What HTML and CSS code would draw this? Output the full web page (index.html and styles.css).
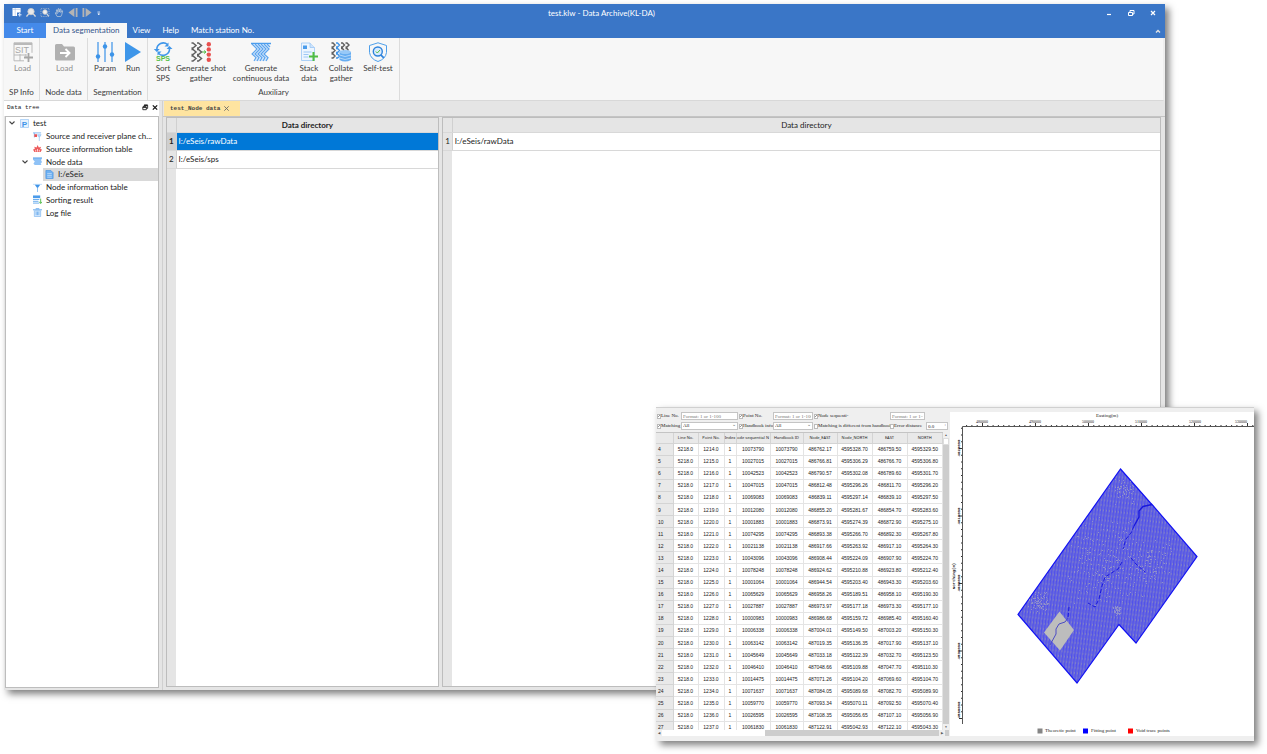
FILE: index.html
```html
<!DOCTYPE html>
<html lang="en">
<head>
<meta charset="utf-8">
<title>test.klw - Data Archive(KL-DA)</title>
<link rel="stylesheet" href="styles.css">
</head>
<body>
<div class="desktop">
<main class="window">
  <header class="titlebar">
    <div class="title-row">
      <div class="quick">
        <button aria-label="New"><svg viewBox="0 0 10 10"><path d="M0 0h9v5H5v4H0z" fill="#fff"/><path d="M0 1.500h9M3 0v9" stroke="#9db9df" stroke-width=".6"/><path d="M6 7.500h4M8 5.500v4" stroke="#dbe9fb" stroke-width="1.200"/></svg></button>
        <button aria-label="Zoom in"><svg viewBox="0 0 10 10"><circle cx="5" cy="4" r="3.500" fill="#e8e8e8" stroke="#c9c9c9"/><path d="M2.500 6.500L0 9.500M7.500 6.500L10 9.500" stroke="#d8d8d8" stroke-width="1.500"/></svg></button>
        <button aria-label="Zoom area"><svg viewBox="0 0 10 10"><rect x=".5" y=".5" width="9" height="9" fill="none" stroke="#a9b8cc" stroke-dasharray="1 1"/><circle cx="5" cy="4.500" r="2.500" fill="#f2f2f2" stroke="#ccc"/><path d="M7 6.500l2 2.500" stroke="#ddd" stroke-width="1.200"/></svg></button>
        <button aria-label="Pan"><svg viewBox="0 0 10 10"><path d="M3 9.500L.8 5.500l1-.4L3 6.500 2 2.200l1-.2 1 3V.8h1L5.500 4.500 6.200 1l1 .2L7 5l1.200-2.200.9.500L8 7.500 7 9.500z" fill="none" stroke="#c6cfdb" stroke-width=".8"/></svg></button>
        <button aria-label="Previous"><svg viewBox="0 0 10 10"><path d="M6.500 0v10L0 5z" fill="#b4b4b4"/><path d="M9 0v10" stroke="#b4b4b4" stroke-width="2"/></svg></button>
        <button aria-label="Next"><svg viewBox="0 0 10 10"><path d="M3.500 0v10L10 5z" fill="#b4b4b4"/><path d="M1 0v10" stroke="#b4b4b4" stroke-width="2"/></svg></button>
        <button aria-label="Customize"><svg viewBox="0 0 10 10"><path d="M1 4.500h3M1.500 6.500h2l-1 1z" stroke="#fff" fill="#fff" stroke-width=".8"/></svg></button>
      </div>
      <h1>test.klw - Data Archive(KL-DA)</h1>
      <div class="winctl">
        <button aria-label="Minimize"><svg viewBox="0 0 8 8"><path d="M2 5.500h4" stroke="#fff" stroke-width="1.200"/></svg></button>
        <button aria-label="Restore"><svg viewBox="0 0 8 8"><path d="M3 3V1.500h4V5H5.500M1.500 3.500h4v3h-4z" stroke="#fff" fill="none"/></svg></button>
        <button aria-label="Close"><svg viewBox="0 0 8 8"><path d="M2 2l4 4M6 2L2 6" stroke="#fff" stroke-width="1.200"/></svg></button>
      </div>
    </div>
    <nav class="menu">
      <button class="start">Start</button>
      <button class="active">Data segmentation</button>
      <button>View</button>
      <button>Help</button>
      <button>Match station No.</button>
      <button class="collapse" aria-label="Collapse ribbon"><svg viewBox="0 0 8 8"><path d="M2 5.500L4 3.500l2 2" stroke="#e4e4e4" stroke-width="1.400" fill="none"/></svg></button>
    </nav>
  </header>

  <section class="ribbon">
    <div class="group sp">
      <div class="tools">
        <button class="tool off"><svg viewBox="0 0 20 20"><path d="M1 .8h18v10M1 .8v18h10M1 13h12M7 .8v2M13 .8v2M7 12v7M13 12v3" fill="none" stroke="#b9b9b9"/><path d="M1 1h18v2H1z" fill="#b9b9b9"/><text x="2" y="11" font-size="9" fill="#a8a8a8">SIT</text><path d="M11 15.500h9M15.500 11v9" stroke="#a6a6a6" stroke-width="1.800"/></svg><span>Load</span></button>
      </div><h2>SP Info</h2>
    </div>
    <div class="group nd">
      <div class="tools">
        <button class="tool off"><svg viewBox="0 0 20 20"><path d="M0 3.500Q0 2 1.500 2H7l2 2.500h9.500Q20 4.500 20 6v11q0 1.500-1.500 1.500h-17Q0 18.500 0 17z" fill="#b1b1b1"/><path d="M5 11h9M10.500 7l4 4-4 4" fill="none" stroke="#fff" stroke-width="1.900"/></svg><span>Load</span></button>
      </div><h2>Node data</h2>
    </div>
    <div class="group sg">
      <div class="tools">
        <button class="tool"><svg viewBox="0 0 20 20"><path d="M3 0v20M10 0v20M17 0v20" stroke="#4b9bea" stroke-width="1.300"/><g fill="#3c93e8"><circle cx="3" cy="14.500" r="2.200"/><circle cx="10" cy="4.500" r="2.200"/><circle cx="17" cy="12.500" r="2.200"/></g></svg><span>Param</span></button>
        <button class="tool"><svg viewBox="0 0 20 20"><path d="M2 0l16 10L2 20z" fill="#3e96e9"/></svg><span>Run</span></button>
      </div><h2>Segmentation</h2>
    </div>
    <div class="group aux">
      <div class="tools">
        <button class="tool w24"><svg viewBox="0 0 20 20"><g fill="none" stroke="#4097ea" stroke-width="1.600"><path d="M3.800 7.500A6.500 6.500 0 0 1 14.500 2.500M16.500 6.500A6.500 6.500 0 0 1 5.500 11.500"/></g><path d="M15.500.5v4h-4zM4.500 13.500v-4h4zM.8 7h6L3.800 10zM13.500 7h6l-3-3z" fill="#4097ea"/><text x="10" y="19" font-size="7" font-weight="700" text-anchor="middle" fill="#56bf48">SPS</text></svg><span>Sort<br>SPS</span></button>
        <button class="tool w52"><svg viewBox="0 0 20 20"><g fill="none" stroke="#606060" stroke-width="1.500"><path d="M.5 1h1.500l3 2.500-3 2.500H.5M.5 7.500h1.500l3 2.500-3 2.500H.5M.5 14h1.500l3 2.500-3 2.500H.5M6 1h1.500l3 2.500L7.500 6H6M6 7.500h1.500l3 2.500-3 2.500H6M6 14h1.500l3 2.500-3 2.500H6"/></g><path d="M11 10h4M13 8.500l2 1.500-2 1.500" stroke="#56bf48" fill="none"/><g fill="#e8504f"><circle cx="17.800" cy="2.200" r="2.200"/><circle cx="17.800" cy="7.400" r="2.200"/><circle cx="17.800" cy="12.600" r="2.200"/><circle cx="17.800" cy="17.800" r="2.200"/></g></svg><span>Generate shot<br>gather</span></button>
        <button class="tool w68"><svg viewBox="0 0 20 20"><path d="M0 1.500h20" stroke="#4b9cec" stroke-width="1.500"/><path d="M1 2l5 5-5 5 4 3.500L3 19h13l2-3.500-4-3.500 5-5-2-2 2-3z" fill="#d3e6fb"/><g fill="none" stroke="#5ba4ee" stroke-width="1.100"><path d="M1 2l5 5-5 5 4 3.500L3 19M4 2l5 5-5 5 4 3.500L6 19M7 2l5 5-5 5 4 3.500L9 19M10 2l5 5-5 5 4 3.500-2 3.500M13 2l5 5-5 5 4 3.500-2 3.500M16 2l3 3"/></g></svg><span>Generate<br>continuous data</span></button>
        <button class="tool w28"><svg viewBox="0 0 20 20"><path d="M2.500 1H11l4.500 4.500V18.500h-13z" fill="#edf5fe" stroke="#9bc7f5" stroke-width=".8"/><path d="M11 1v4.500h4.500" fill="#cfe4fb" stroke="#9bc7f5" stroke-width=".8"/><path d="M4 3.500h4v3.500H4z" fill="#4a9ceb"/><path d="M4.500 10h8M4.500 12.500h5M4.500 15h5" stroke="#9bc7f5"/><path d="M10 14.500h9M14.500 10v9" stroke="#51bd43" stroke-width="2"/></svg><span>Stack<br>data</span></button>
        <button class="tool w36"><svg viewBox="0 0 20 20"><g fill="none" stroke="#606060" stroke-width="1.400"><path d="M.5 1H2l2 2-2 2H.500M.5 6.500H2l2 2-2 2H.500M.5 12H2l2 2-2 2H.500"/><path d="M5 1h1.500l2 2-2 2H5M5 6.500h1.500l2 2-2 2H5M5 12h1.500l2 2-2 2H5" stroke="#3f94e8"/><path d="M10 1h1.500l2 2-2 2H10M14.500 1H16l2 2-2 2h-1.500M10 6.500h1.500l1.500 2M14.500 6.500H16l1.500 2"/></g><path d="M8.500 10v8q5.500 3 11.500 0v-8z" fill="#66adf1"/><ellipse cx="14.200" cy="10" rx="5.700" ry="2" fill="#98c9f7"/><path d="M8.500 13q5.500 3 11.500 0M8.500 16q5.500 3 11.500 0" fill="none" stroke="#d3e8fc" stroke-width=".7"/></svg><span>Collate<br>gather</span></button>
        <button class="tool w38"><svg viewBox="0 0 20 20"><path d="M10 .8l8.500 2.700v7Q17.500 17 10 19.500 2.500 17 1.500 10.500v-7z" fill="none" stroke="#4e9fea"/><circle cx="9.800" cy="9.500" r="4.500" fill="#d9ebfd" stroke="#2e83dc" stroke-width="1.400"/><path d="M7.800 9.500l1.500 1.500 2.700-3" fill="none" stroke="#51bd43"/><path d="M12.800 12.800l3 3" stroke="#2e83dc" stroke-width="1.700"/></svg><span>Self-test</span></button>
      </div><h2>Auxiliary</h2>
    </div>
  </section>

  <div class="work">
    <aside class="dock">
      <div class="dock-title"><h2>Data tree</h2>
        <button aria-label="Float"><svg viewBox="0 0 8 8"><path d="M3 3V1.500h4V5H5.500M1.500 3.500h4v3h-4z" stroke="#222" fill="none"/><path d="M3 1.500h4M1.500 3.500h4" stroke="#222" stroke-width="1.600"/></svg></button>
        <button aria-label="Close"><svg viewBox="0 0 8 8"><path d="M1.500 1.500l5 5M6.500 1.500l-5 5" stroke="#111" stroke-width="1.400"/></svg></button>
      </div>
      <div class="tree-box">
      <ul class="tree">
        <li class="l0"><svg class="arrow" viewBox="0 0 8 8"><path d="M1.500 2.500L4 5l2.500-2.500" stroke="#444" fill="none" stroke-width="1.100"/></svg><svg viewBox="0 0 10 10"><path d="M.5 .5h9v9h-9z" fill="#e6f2fe" stroke="#a9cff6"/><text x="5" y="8.500" text-anchor="middle" font-size="9" font-weight="700" fill="#3f94e8">P</text></svg>test</li>
        <li class="l1"><svg viewBox="0 0 10 10"><path d="M0 1h9M1.500 1v5" stroke="#79b3ef"/><path d="M1.500 2.500h3v3h-3z" fill="#ec4e50"/><path d="M5 3h4L7 6zM7 6v4" fill="#bcdcfa" stroke="#93c3f2" stroke-width=".8"/></svg>Source and receiver plane ch...</li>
        <li class="l1"><svg viewBox="0 0 10 10"><path d="M1.500 9L0 6l2-.5L1.500 3 4 4l1-3 1.500 3L9 3l-1 2.500 2 .5-1.500 3z" fill="#ed5a5b"/><path d="M3 8.500V6.500M5 8.500V5.500M7 8.500V6.500" stroke="#fff" stroke-width=".8"/></svg>Source information table</li>
        <li class="l1 open"><svg class="arrow" viewBox="0 0 8 8"><path d="M1.500 2.500L4 5l2.500-2.500" stroke="#444" fill="none" stroke-width="1.100"/></svg><svg viewBox="0 0 10 10"><path d="M0 1h10L9 3.500l1 2-1.500 2L9.500 9H2L.5 7.500 2 5 0 3z" fill="#8fc2f6"/><path d="M0 1h10" stroke="#579fe9"/></svg>Node data</li>
        <li class="l2 sel"><svg viewBox="0 0 10 10"><path d="M1 .5h5.500L9 3v6.500H1z" fill="#6fb1f2" stroke="#3e8fe2" stroke-width=".7"/><path d="M2.500 4h5M2.500 6h5M2.500 8h5" stroke="#d8eafd" stroke-width=".7"/></svg>I:/eSeis</li>
        <li class="l1"><svg viewBox="0 0 10 10"><path d="M0 1.500h10" stroke="#c0dcf8"/><path d="M2 2h6L5 6z" fill="#3f94e8"/><path d="M5 5v5" stroke="#82b9f0"/></svg>Node information table</li>
        <li class="l1"><svg viewBox="0 0 10 10"><path d="M0 .5h8v3H0z" fill="#4b9bea"/><path d="M0 5h7M0 7h6M0 9h7" stroke="#5ca5ec"/><path d="M8.500 4v5M7 7.500l1.500 2 1.500-2" stroke="#4fbb47" fill="none"/></svg>Sorting result</li>
        <li class="l1"><svg viewBox="0 0 10 10"><path d="M0 2h10M3 .8h4" stroke="#5ba4ec"/><path d="M1.500 3h7v6.500h-7z" fill="#d7eafd" stroke="#84baf0" stroke-width=".8"/><path d="M3.500 4v4M5 4v4M6.500 4v4" stroke="#4c9be8" stroke-width=".7"/></svg>Log file</li>
      </ul>
      </div>
    </aside>
    <section class="docs">
      <div class="doc-tabs"><button class="doc-tab">test_Node data <svg viewBox="0 0 8 8"><path d="M1.500 1.500l5 5M6.500 1.500l-5 5" stroke="#666"/></svg></button></div>
      <div class="panes">
        <div class="pane left">
          <table class="dirs"><thead><tr><th></th><th>Data directory</th></tr></thead>
          <tbody><tr class="sel"><th>1</th><td>I:/eSeis/rawData</td></tr><tr><th>2</th><td>I:/eSeis/sps</td></tr></tbody></table>
        </div>
        <div class="pane right">
          <table class="dirs"><thead><tr><th></th><th>Data directory</th></tr></thead>
          <tbody><tr><th>1</th><td>I:/eSeis/rawData</td></tr></tbody></table>
        </div>
      </div>
    </section>
  </div>
</main>

<section class="inspector">
  <div class="data">
    <form class="filters">
      <label><input type="checkbox" checked>Line No.</label>
      <input type="text" aria-label="Line No." placeholder="Format: 1 or 1-100">
      <label><input type="checkbox" checked>Point No.</label>
      <input type="text" aria-label="Point No." placeholder="Format: 1 or 1-100">
      <label><input type="checkbox" checked>Node sequenti-</label>
      <input type="text" aria-label="Node sequential" placeholder="Format: 1 or 1--">
      <i></i>
      <label><input type="checkbox" checked>Matching</label>
      <div class="drop"><select aria-label="Matching"><option>All</option></select></div>
      <label><input type="checkbox" checked>Handbook info</label>
      <div class="drop"><select aria-label="Handbook info"><option>All</option></select></div>
      <label><input type="checkbox">Matching is different from handbook</label>
      <label><input type="checkbox">Error distance</label>
      <div class="drop spin"><input type="text" aria-label="Error distance" value="0.0"></div>
    </form>
    <div class="grid-area">
      <div class="grid-clip">
        <table class="stations">
          <colgroup><col class="c17"><col class="c25"><col class="c26"><col class="c12"><col class="c34"><col class="c33"><col class="c34"><col class="c35"><col class="c35"><col></colgroup>
          <thead><tr><th></th><th>Line No.</th><th>Point No.</th><th>Index</th><th>ode sequential N</th><th>Handbook ID</th><th>Node_EAST</th><th>Node_NORTH</th><th>EAST</th><th>NORTH</th></tr></thead>
          <tbody id="rows"></tbody>
        </table>
      </div>
      <div class="vbar"><b>▲</b><i></i><b class="end">▼</b></div>
      <div class="hbar"><b>◀</b><i></i><b class="end">▶</b></div>
    </div>
  </div>
  <svg class="plot" viewBox="950 412 304 324">
    <defs>
      <pattern id="weave" width="3" height="5" patternUnits="userSpaceOnUse" patternTransform="rotate(7)">
        <rect width="3" height="5" fill="#6767de"/><rect width="1" height="5" fill="#5050ea"/><rect x="2" y="1" width="1" height="2" fill="#8080c8"/>
      </pattern>
    </defs>
    <path d="M962.500 724V426.500H1254" fill="none" stroke="#555"/>
    <g id="ticks" stroke="#333"></g>
    <g id="labels" class="axis"></g>
    <text class="title" x="1107" y="417" text-anchor="middle">Easting(m)</text>
    <text class="ylab" transform="translate(955 576) rotate(-90)" text-anchor="middle">Northing(m)</text>
    <path id="area" d="M1120.500 469L1150.500 503L1152 504.500L1197 556.500L1136 643L1119 624.500L1077 683L1018 614.500Z" fill="url(#weave)" stroke="#1212f4" stroke-width="1.200"/>
    <g id="specks" fill="#9090cc"></g>
    <path d="M1059.500 611.500L1074 630L1060 650.500L1044 632.500Z" fill="#bdbdbd"/>
    <g fill="none" stroke="#1818dd">
      <path d="M1152 504.500l-9 2-4 4.500v6l-5 9" stroke-width="1.400"/>
      <path d="M1134 526l-3 7-5 6-3 10M1131 558l5 6 9 8M1122 562l-4 7-13 8-3 9-3 13-4 8-7-4M1069 607l-1 11" stroke-dasharray="4 2"/>
      <path d="M1068 618l-3 4-6 2-3 5v5l-6 11" stroke="#4c4cc4"/>
    </g>
    <path d="M1037.500 728.500h5v5h-5z" fill="#858585"/><text class="legend" x="1045" y="732">Theoretic point</text>
    <path d="M1083 728.500h5v5h-5z" fill="#00f"/><text class="legend" x="1091" y="732">Fitting point</text>
    <path d="M1128 728.500h5v5h-5z" fill="#f00"/><text class="legend" x="1136" y="732">Void trace points</text>
  </svg>
</section>
</div>
<script src="script.js"></script>
</body>
</html>
```
FILE: styles.css
```css
* { box-sizing: border-box; }
body { margin: 0; background: #fff; font-family: Lato, "Noto Sans", sans-serif; font-size: 8px; line-height: 10px; color: #222; }
h1, h2 { margin: 0; font-size: inherit; font-weight: 400; }
button { border: 0; padding: 0; background: none; font: inherit; color: inherit; }
svg { display: block; }
.desktop { position: relative; min-height: 100vh; padding: 4px 102px 64px 4px; display: flex; overflow: hidden; }

.window { flex: 1; display: flex; flex-direction: column; background: #e5e5e5; box-shadow: 4px 4px 7px 0 rgba(0,0,0,.5); }
.titlebar { background: #3a76c7; color: #fff; }
.title-row { display: flex; justify-content: space-between; align-items: center; height: 19px; padding: 0 8px 2px; }
.title-row h1 { padding-left: 34px; }
.quick, .winctl { display: flex; flex: 1; gap: 4px; align-items: center; }
.quick svg { width: 10px; height: 9px; }
.winctl { justify-content: flex-end; gap: 14px; }
.winctl svg { width: 8px; height: 8px; }
.menu { display: flex; height: 15px; }
.menu button { padding: 0 6px 2px; }
.menu .start { width: 42px; background: #448aea; }
.menu .active { padding: 0 7px 2px; background: #f7f7f7; color: #34548a; }
.menu .collapse { margin-left: auto; padding: 0 3px; }
.collapse svg { width: 8px; height: 8px; }

.ribbon { display: flex; height: 63px; background: #f7f7f7; border-bottom: 1px solid #d8d8d8; border-right: 2px solid #eee; color: #3c3c3c; }
.group { display: flex; flex-direction: column; justify-content: space-between; border-right: 1px solid #dcdcdc; padding: 4px 0 3px; }
.group h2 { text-align: center; }
.sp { width: 36px; }
.nd { width: 48px; }
.sg { width: 60px; }
.aux { width: 252px; }
.tools { display: flex; justify-content: center; padding-left: 2px; }
.sg .tools { justify-content: flex-end; }
.aux .tools { justify-content: flex-start; padding-left: 3px; }
.tool { display: flex; flex-direction: column; align-items: center; justify-content: flex-start; gap: 1px; width: 28px; white-space: nowrap; }
.tool svg { width: 20px; height: 20px; font-family: "Liberation Sans", sans-serif; }
.tool.off { color: #8d8d8d; }
.w24 { width: 24px; } .w52 { width: 52px; } .w68 { width: 68px; } .w36 { width: 36px; } .w38 { width: 38px; }

.work { flex: 1; display: flex; min-height: 0; }
.dock { width: 159px; display: flex; flex-direction: column; padding: 0 3px 2px 0; border-right: 1px solid #d0d0d0; background: #e5e5e5; }
.dock-title { display: flex; gap: 2px; align-items: center; height: 15px; padding: 0 0 2px 3px; background: #fff; }
.dock-title h2 { margin-right: auto; }
.dock-title h2, .doc-tab { font-family: "Liberation Mono", monospace; font-size: 6px; }
.dock-title svg { width: 8px; height: 7px; }
.tree-box { flex: 1; margin-left: 1px; border: 1px solid #bdbdbd; background: #fff; }
.tree { display: grid; grid-auto-rows: 1fr; height: 102px; margin: 0; padding: 0; list-style: none; }
.tree li { display: flex; align-items: center; gap: 4px; white-space: nowrap; }
.tree svg { width: 9px; height: 9px; font-family: "Liberation Sans", sans-serif; }
.tree .arrow { width: 8px; height: 8px; }
.tree .l0 { padding-left: 2px; }
.tree .l1 { padding-left: 27px; }
.tree .open { padding-left: 15px; }
.tree .sel { margin-left: 37px; padding-left: 2px; background: #d9d9d9; }
.docs { flex: 1; display: flex; flex-direction: column; }
.doc-tabs { display: flex; height: 15px; padding-left: 1px; }
.doc-tab { display: flex; align-items: center; gap: 3px; padding: 0 10px 0 6px; background: #fee4a0; font-weight: 700; color: #444; }
.doc-tab svg { width: 7px; height: 7px; }
.panes { flex: 1; display: flex; gap: 3px; padding: 0 4px 3px 3px; border-top: 1px solid #c4c4c4; }
.pane { border: 1px solid #bdbdbd; background: linear-gradient(90deg, #e5e5e5 9px, #fff 9px); }
.left { flex: 273; }
.right { flex: 721; }
.dirs { width: 100%; border-collapse: collapse; table-layout: fixed; }
.dirs th, .dirs td { height: 18px; padding: 0; border-bottom: 1px solid #d8d8d8; text-align: left; background: #fff; }
.dirs tbody th, .dirs thead th { background: #e5e5e5; text-align: center; font-weight: 400; }
.dirs th:first-child { width: 9px; border-right: 1px solid #d0d0d0; }
.dirs thead th { height: 14px; }
.dirs td { padding-left: 2px; }
.left thead th:last-child { font-weight: 700; }
.dirs .sel td { background: #0078d7; color: #fff; }
.dirs .sel th { background: #cfcfcf; font-weight: 700; }

.inspector { position: absolute; right: 13px; bottom: 13px; width: 598px; height: 334px; display: flex; gap: 1px; padding: 4px 0 5px; background: #efefef; border-top: 1px solid #d0d0d0; box-shadow: 4px 4px 7px 0 rgba(0,0,0,.5); }
.data { width: 293px; display: flex; flex-direction: column; }
.filters { display: grid; grid-template-columns: 23px 57px 33px 40px 75px 35px 22px; grid-auto-rows: 8px; gap: 2px 1px; height: 20px; margin: 0; padding-left: 1px; font-family: "Liberation Serif", serif; font-size: 5px; line-height: 8px; }
.filters label { display: flex; align-items: center; white-space: nowrap; }
.filters input, .filters select { width: 100%; min-width: 0; height: 8px; margin: 0; padding: 0 1px; border: 1px solid #c4c4c4; background: #fff; font: inherit; line-height: 6px; color: #222; appearance: none; border-radius: 0; }
.filters ::placeholder { color: #777; }
.filters input[type=checkbox] { flex: none; width: 4px; height: 5px; padding: 0; border-color: #bbb; }
.filters input:checked { background: linear-gradient(135deg, #fff 40%, #999 40%, #999 60%, #fff 60%); }
.drop { position: relative; display: flex; }
.drop::after { content: "⌄"; position: absolute; right: 2px; top: -1px; color: #555; }
.spin::after { content: ":"; }
.grid-area { flex: 1; min-height: 0; display: grid; grid-template: minmax(0, 1fr) 6px / minmax(0, 1fr) 6px; }
.grid-clip { overflow: hidden; border-top: 1px solid #c4c4c4; background: #fff; }
.stations { width: 100%; height: 301px; table-layout: fixed; border-collapse: collapse; font-family: "Liberation Sans", sans-serif; font-size: 5px; line-height: 6px; color: #222; }
.stations th, .stations td { padding: 0; border: 1px solid #e4e4e4; border-width: 0 1px 1px 0; text-align: center; white-space: nowrap; }
.stations th { background: #e9e9e9; border-color: #d4d4d4; font-weight: 400; }
.stations thead { font-family: "Noto Sans", sans-serif; font-size: 4px; }
.stations thead tr { height: 10px; }
.stations tbody th { text-align: left; padding-left: 2px; }
.c12 { width: 12px; } .c17 { width: 17px; } .c25 { width: 25px; } .c26 { width: 26px; } .c33 { width: 33px; } .c34 { width: 34px; } .c35 { width: 35px; }
.vbar, .hbar { display: flex; background: #cdcdcd; font-size: 3px; line-height: 6px; color: #555; }
.vbar { flex-direction: column; }
.hbar { grid-column: 1 / -1; }
.vbar b, .hbar b { width: 6px; height: 6px; text-align: center; background: #efefef; }
.vbar i { height: 7px; background: #fff; border: 1px solid #ddd; }
.hbar i { width: 103px; background: #fff; }
.vbar .end { margin-top: auto; }
.hbar .end { margin-left: auto; margin-right: 4px; }
.plot { flex: 1; min-width: 0; height: 100%; background: #fff; font-family: "Liberation Serif", serif; }
.axis, .legend, .title, .ylab { fill: #222; }
.axis, .ylab { font-size: 4px; }
.ylab { font-family: "Liberation Mono", monospace; font-weight: 700; }
.legend, .title { font-size: 5px; }
```
FILE: script.js
```js
// id, node east, node north, east, north
const stations = `10073790 486762.17 4595328.70 486759.50 4595329.50
10027015 486766.81 4595306.29 486766.70 4595306.80
10042523 486790.57 4595302.08 486789.60 4595301.70
10047015 486812.48 4595296.26 486811.70 4595296.20
10069083 486839.11 4595297.14 486839.10 4595297.50
10012080 486855.20 4595281.67 486854.70 4595283.60
10001883 486873.91 4595274.39 486872.90 4595275.10
10074295 486893.38 4595266.70 486892.30 4595267.80
10021138 486917.66 4595263.92 486917.10 4595264.30
10043096 486908.44 4595224.09 486907.90 4595224.70
10078248 486924.62 4595210.88 486923.80 4595212.40
10001064 486944.54 4595203.40 486943.30 4595203.60
10065629 486958.26 4595189.51 486958.10 4595190.30
10027887 486973.97 4595177.18 486973.30 4595177.10
10000983 486986.68 4595159.72 486985.40 4595160.40
10006338 487004.01 4595149.50 487003.20 4595150.30
10063142 487019.35 4595136.35 487017.90 4595137.10
10045649 487033.18 4595122.39 487032.70 4595123.50
10046410 487048.66 4595109.88 487047.70 4595110.30
10014475 487071.26 4595104.20 487069.60 4595104.70
10071637 487084.05 4595089.68 487082.70 4595089.90
10059770 487093.34 4595070.11 487092.50 4595070.40
10026595 487108.35 4595056.65 487107.10 4595056.90
10061830 487122.91 4595042.93 487122.10 4595043.30`.split("\n");

document.getElementById("rows").innerHTML = stations.map((line, i) => {
  const [id, ...coords] = line.split(" ");
  const cells = ["5218.0", (1214 + i) + ".0", "1", id, id, ...coords];
  return `<tr><th>${i + 4}</th>${cells.map(c => `<td>${c}</td>`).join("")}</tr>`;
}).join("");

let ticks = "", labels = "";
for (let i = -3; i <= 51; i++) {
  const x = 982.5 + i * 5.3, len = i % 10 ? 1 : 3;
  if (x < 1254) ticks += `<path d="M${x} 426v-${len}"/>`;
}
for (let i = -3; i <= 40; i++) {
  const y = 448.5 + i * 6.75, len = i % 10 ? 1 : 3;
  ticks += `<path d="M962 ${y}h-${len}"/>`;
}
[982, 1035, 1088, 1141, 1195, 1241].forEach((x, i) => {
  labels += `<text x="${x}" y="423" text-anchor="middle">${480000 + i * 10000}</text>`;
});
[448, 516, 583, 651, 710].forEach((y, i) => {
  labels += `<text class="ylab" transform="translate(960 ${y}) rotate(-90)" text-anchor="middle">${4620000 - i * 10000}</text>`;
});
document.getElementById("ticks").innerHTML = ticks;
document.getElementById("labels").innerHTML = labels;

// Scattered unmatched points inside the survey outline
const clusters = [[1122, 490, 14, 60], [1038, 600, 12, 90], [1117, 610, 5, 50], [1105, 560, 45, 200], [1150, 560, 25, 90]];
let seed = 7, specks = "";
const rand = () => (seed = seed * 16807 % 2147483647) / 2147483647;
const area = document.getElementById("area");
for (const [cx, cy, r, n] of clusters) {
  for (let i = 0; i < n; i++) {
    const p = new DOMPoint(Math.round(cx + (rand() + rand() - 1) * r), Math.round(cy + (rand() + rand() - 1) * r));
    if (area.isPointInFill(p)) specks += `<rect x="${p.x}" y="${p.y}" width="1" height="1"/>`;
  }
}
document.getElementById("specks").innerHTML = specks;
```
